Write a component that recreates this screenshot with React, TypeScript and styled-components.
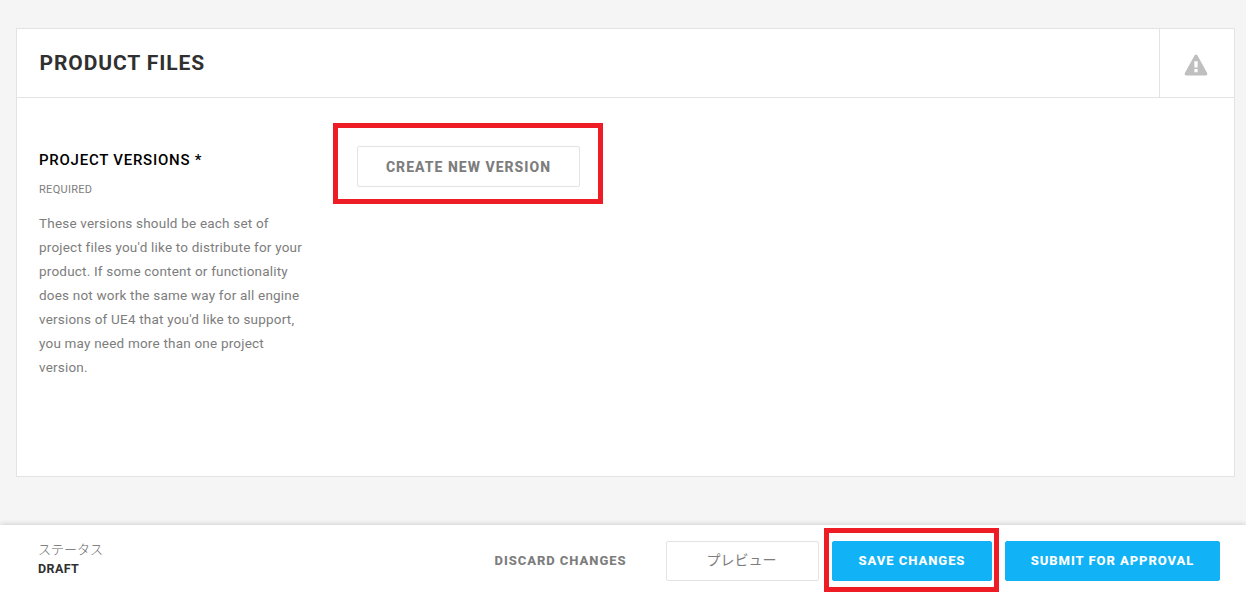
import styled, { createGlobalStyle } from "styled-components";

const Colors = {
  white: "#ffffff",
  pageGrey: "#f5f5f5",
  borderGrey: "#e3e3e3",
  iconGrey: "#bfbfbf",
  textGrey: "#7d7d7d",
  statusGrey: "#666666",
  titleGrey: "#303030",
  black: "#000000",
  blue: "#12b3f6",
  highlightRed: "#ee1c25",
};

const GlobalStyle = createGlobalStyle`
  * {
    box-sizing: border-box;
  }

  body {
    margin: 0;
    background-color: ${Colors.pageGrey};
    font-family: Roboto, "Noto Sans CJK JP", sans-serif;
  }
`;

const Page = styled.div`
  display: flex;
  flex-direction: column;
  justify-content: space-between;
  height: 595px;
  overflow: hidden;
`;

const Card = styled.section`
  display: flex;
  flex-direction: column;
  height: 449px;
  margin: 28px 11px 0 16px;
  border: 1px solid ${Colors.borderGrey};
  background-color: ${Colors.white};
`;

const CardHeader = styled.header`
  display: flex;
  height: 69px;
  border-bottom: 1px solid ${Colors.borderGrey};
`;

const CardTitle = styled.h2`
  flex: 1;
  margin: 0;
  padding-left: 22.5px;
  color: ${Colors.titleGrey};
  font-size: 21px;
  font-weight: 700;
  letter-spacing: 0.9px;
  line-height: 68px;
`;

const WarningCell = styled.div`
  display: flex;
  justify-content: center;
  align-items: center;
  width: 75px;
  padding: 4px 2px 0 0;
  border-left: 1px solid ${Colors.borderGrey};
`;

const CardBody = styled.div`
  display: flex;
  align-items: flex-start;
  padding: 25px 22px 0;
`;

const Description = styled.div`
  width: 294px;
  padding-top: 27px;
`;

const FieldTitle = styled.h3`
  margin: 0;
  color: ${Colors.black};
  font-size: 15px;
  font-weight: 500;
  letter-spacing: 0.75px;
  line-height: 20px;
`;

const Required = styled.div`
  margin-top: 10px;
  color: ${Colors.textGrey};
  font-size: 11px;
  letter-spacing: 0.3px;
  line-height: 20px;
`;

const Help = styled.p`
  width: 275px;
  margin: 11px 0 0;
  color: ${Colors.textGrey};
  font-size: 13.5px;
  letter-spacing: 0.2px;
  line-height: 24px;
`;

const Highlight = styled.div<{ $padding: string }>`
  padding: ${({ $padding }) => $padding};
  border: 5px solid ${Colors.highlightRed};
`;

const Button = styled.button<{
  $width: number;
  $primary?: boolean;
  $size?: number;
  $spacing?: number;
}>`
  display: block;
  width: ${({ $width }) => $width}px;
  height: 40px;
  padding: 0 0 1px;
  border: 1px solid
    ${({ $primary }) => ($primary ? Colors.blue : Colors.borderGrey)};
  border-radius: 2px;
  background-color: ${({ $primary }) =>
    $primary ? Colors.blue : Colors.white};
  color: ${({ $primary }) => ($primary ? Colors.white : Colors.textGrey)};
  font-family: inherit;
  font-size: ${({ $size = 13 }) => $size}px;
  font-weight: 800;
  letter-spacing: ${({ $spacing = 0.95 }) => $spacing}px;
`;

const CreateButton = styled(Button)`
  height: 41px;
  padding: 0;
`;

const PreviewButton = styled(Button)`
  padding: 0 2px 4px 0;
  font-weight: 400;
`;

const DiscardButton = styled(Button)`
  margin-right: 23px;
  border: none;
`;

const Footer = styled.footer`
  display: flex;
  justify-content: space-between;
  align-items: flex-start;
  height: 70px;
  padding: 0 26px 0 38px;
  background-color: ${Colors.white};
  box-shadow: 0 0 6px rgba(0, 0, 0, 0.2);
`;

const Status = styled.div`
  padding-top: 15px;
  color: ${Colors.statusGrey};
  font-size: 13px;
  font-weight: 300;
  line-height: 19px;
`;

const StatusValue = styled.div`
  color: ${Colors.titleGrey};
  font-size: 12.5px;
  font-weight: 700;
  letter-spacing: 0.4px;
`;

const Actions = styled.div`
  display: flex;
  align-items: flex-start;
  padding-top: 16px;
`;

const SaveHighlight = styled(Highlight)`
  margin: -13px 6px 0 5px;
`;

const WarningIcon = () => (
  <svg width="24" height="22" viewBox="0 0 24 22">
    <path
      d="M12 .5c.7 0 1.200.4 1.500.9l9.600 17.700c.7 1.200-.1 2.400-1.400 2.400H2.300C1 21.500.2 20.300.9 19.100L10.500 1.400C10.800.9 11.300.5 12 .5z"
      fill={Colors.iconGrey}
    />
    <path
      d="M10.200 7.300h3.600l-.3 6.200h-3zM10.400 15h3.200v3.200h-3.200z"
      fill={Colors.white}
    />
  </svg>
);

const App = () => {
  return (
    <>
      <GlobalStyle />
      <Page>
        <Card>
          <CardHeader>
            <CardTitle>PRODUCT FILES</CardTitle>
            <WarningCell>
              <WarningIcon />
            </WarningCell>
          </CardHeader>
          <CardBody>
            <Description>
              <FieldTitle>PROJECT VERSIONS *</FieldTitle>
              <Required>REQUIRED</Required>
              <Help>
                These versions should be each set of
                <br />
                project files you'd like to distribute for your product. If some
                content or functionality does not work the same way for all
                engine versions of UE4 that you'd like to support, you may need
                more than one project version.
              </Help>
            </Description>
            <Highlight $padding="18px 18px 12px 19px">
              <CreateButton $width={223} $size={14} $spacing={1.03}>
                CREATE NEW VERSION
              </CreateButton>
            </Highlight>
          </CardBody>
        </Card>
        <Footer>
          <Status>
            ステータス
            <StatusValue>DRAFT</StatusValue>
          </Status>
          <Actions>
            <DiscardButton $width={165}>DISCARD CHANGES</DiscardButton>
            <PreviewButton $width={153} $size={14} $spacing={0}>
              プレビュー
            </PreviewButton>
            <SaveHighlight $padding="8px 2px 6px 3px">
              <Button $width={160} $primary>
                SAVE CHANGES
              </Button>
            </SaveHighlight>
            <Button $width={215} $primary>
              SUBMIT FOR APPROVAL
            </Button>
          </Actions>
        </Footer>
      </Page>
    </>
  );
};

export default App;
